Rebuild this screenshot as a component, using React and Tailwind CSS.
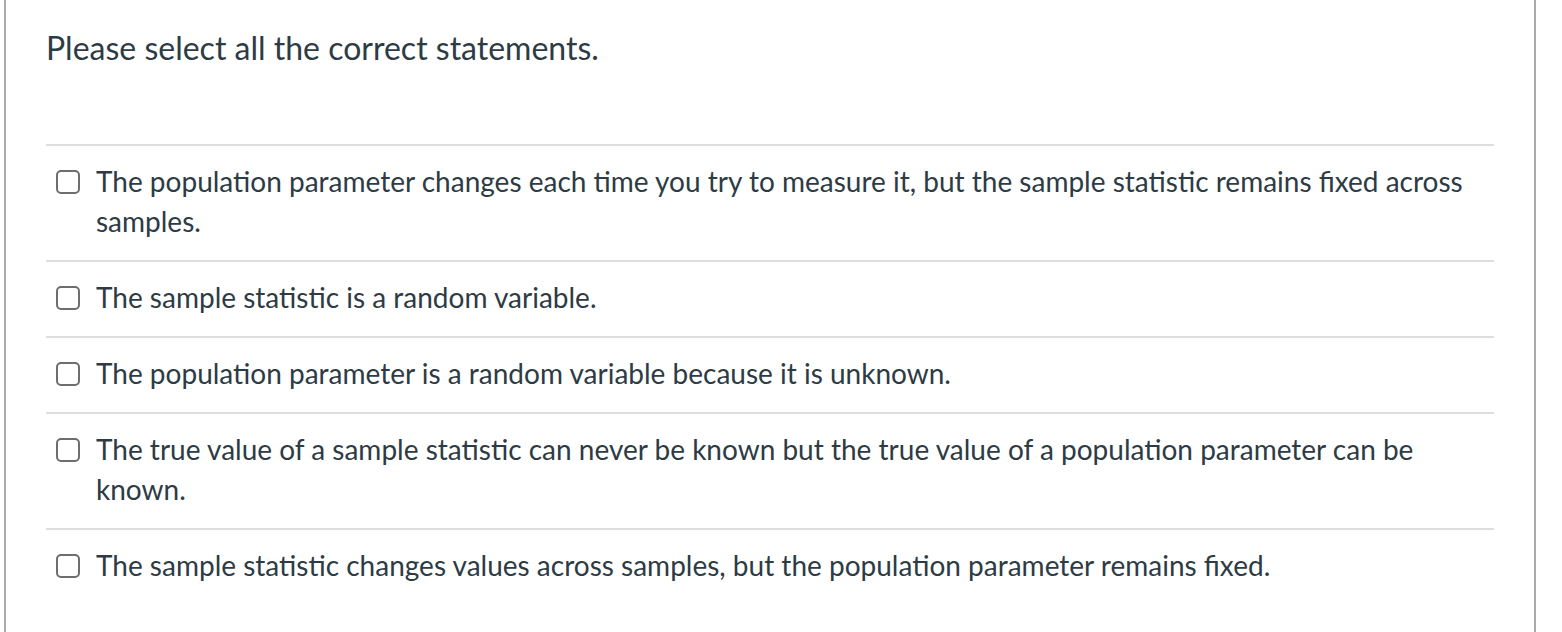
const options = [
  "The population parameter changes each time you try to measure it, but the sample statistic remains fixed across samples.",
  "The sample statistic is a random variable.",
  "The population parameter is a random variable because it is unknown.",
  "The true value of a sample statistic can never be known but the true value of a population parameter can be known.",
  "The sample statistic changes values across samples, but the population parameter remains fixed.",
];

export default function App() {
  return (
    <div className="h-[632px] w-[1562px] overflow-hidden bg-white font-['Lato',sans-serif] text-[#2d3b45]">
      <div className="ml-[4px] h-full w-[1532px] border-x-2 border-[#aaaaaa] px-[40px] pt-[28px]">
        <p className="text-[32px] leading-[40px]">Please select all the correct statements.</p>

        <div className="mt-[76px] border-t-2 border-[#dddddd]">
          {options.map((text, i) => (
            <label key={i} className="flex items-start gap-[16px] border-b-2 border-[#dddddd] pl-[10px] pt-[15px] pb-[19px] last:border-b-0">
              <span className="mt-[9px] h-[24px] w-[24px] shrink-0 rounded-[5px] border-2 border-[#6e6e6e] bg-white" />
              <span className="text-[28px] leading-[40px]">{text}</span>
            </label>
          ))}
        </div>
      </div>
    </div>
  );
}
